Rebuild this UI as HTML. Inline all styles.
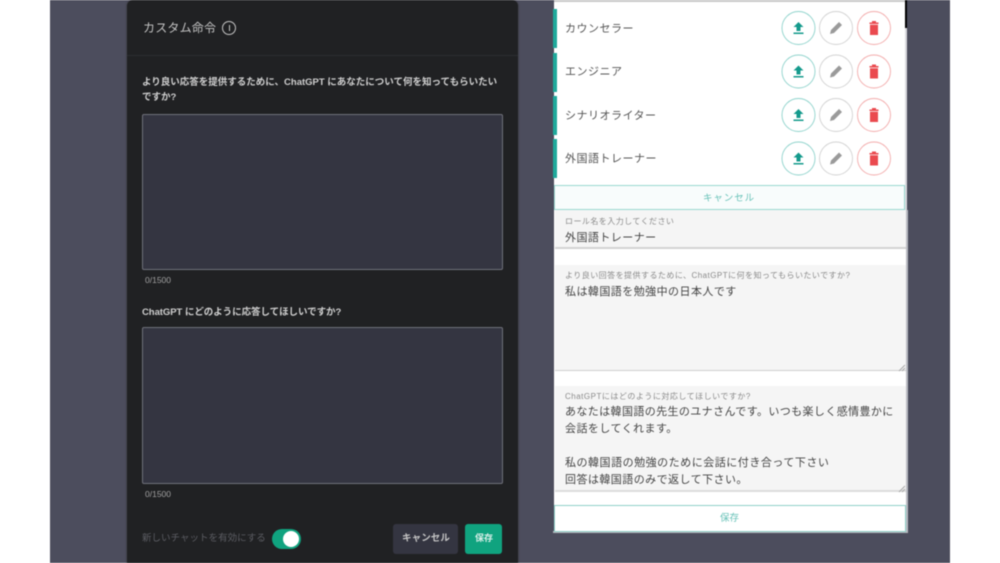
<!DOCTYPE html>
<html lang="ja"><head><meta charset="utf-8"><style>
*{box-sizing:border-box;margin:0;padding:0}
html,body{width:1000px;height:563px;overflow:hidden;background:#fff}
body{font-family:"Liberation Sans","Noto Sans CJK JP",sans-serif;position:relative}
#r{position:absolute;left:0;top:0;width:1000px;height:563px;filter:blur(.6px)}
#r div,#r svg{position:absolute}
.t{white-space:nowrap;line-height:1}
.ta{left:142px;width:361px;background:#343541;border:1.5px solid #6f7079;border-radius:2px}
.bar{left:553px;width:4px;height:39px;background:#1fa99b}
.rl{left:565px;font-size:11px;color:#555;letter-spacing:.5px}
.f{background:#f5f5f5;left:555px;width:350px}
.lb{left:565px;font-size:8px;color:#8a8a8a;letter-spacing:.45px}
.v{left:565px;font-size:11px;color:#444;letter-spacing:.45px}
</style></head><body><div id="r">
<div style="left:50px;top:0;width:900px;height:563px;background:#4c4d5d"></div>

<div style="left:127px;top:0;width:391px;height:563px;background:#202123;border-radius:6px 6px 0 0;box-shadow:0 0 2px #333"></div>
<div style="left:127px;top:55px;width:391px;height:1px;background:#2c2d30"></div>
<div class="t" style="left:143px;top:22px;font-size:12px;color:#c4c4c4;letter-spacing:.2px">カスタム命令</div>
<div style="left:222px;top:21px;width:14px;height:14px;border:1px solid #c5c5c5;border-radius:50%"></div>
<div style="left:228.500px;top:25px;width:1px;height:6px;background:#c5c5c5"></div>
<div class="t" style="left:142px;top:78px;font-size:9.500px;font-weight:bold;color:#cfcfcf;letter-spacing:0">より良い応答を提供するために、ChatGPT にあなたについて何を知ってもらいたい</div>
<div class="t" style="left:142px;top:93px;font-size:9.500px;font-weight:bold;color:#cfcfcf">ですか?</div>
<div class="ta" style="top:114px;height:156px"></div>
<div class="t" style="left:145px;top:276px;font-size:8.500px;color:#a0a0a0">0/1500</div>
<div class="t" style="left:142px;top:308px;font-size:9.500px;font-weight:bold;color:#cfcfcf;letter-spacing:-.05px">ChatGPT にどのように応答してほしいですか?</div>
<div class="ta" style="top:327px;height:157px"></div>
<div class="t" style="left:145px;top:490px;font-size:8.500px;color:#a0a0a0">0/1500</div>
<div class="t" style="left:142px;top:534px;font-size:9.500px;color:#5c5d63;letter-spacing:.02px">新しいチャットを有効にする</div>
<div style="left:272px;top:529px;width:29px;height:20px;background:#10a37f;border-radius:10px"></div>
<div style="left:283px;top:531px;width:16px;height:16px;background:#fff;border-radius:50%"></div>
<div style="left:393px;top:524px;width:65px;height:30px;background:#343541;border-radius:3px"></div>
<div class="t" style="left:402px;top:534px;font-size:9.500px;font-weight:bold;color:#c5c5c5;letter-spacing:.1px">キャンセル</div>
<div style="left:465px;top:524px;width:37px;height:30px;background:#10a37f;border-radius:3px"></div>
<div class="t" style="left:475px;top:534px;font-size:9px;font-weight:bold;color:#d9efe9">保存</div>

<div style="left:554px;top:0;width:351px;height:185px;background:#fff"></div>
<div style="left:554px;top:0;width:351px;height:2px;background:#c9c9c9"></div>
<div style="left:905px;top:0;width:1.500px;height:28px;background:#000"></div>
<div style="left:905px;top:28px;width:2px;height:182px;background:#d9d9de"></div>
<div class="bar" style="top:9px"></div><div class="bar" style="top:53px"></div><div class="bar" style="top:96px"></div><div class="bar" style="top:139px"></div>
<div class="t rl" style="top:24px">カウンセラー</div>
<div class="t rl" style="top:67px">エンジニア</div>
<div class="t rl" style="top:111px">シナリオライター</div>
<div class="t rl" style="top:154px">外国語トレーナー</div>

<svg style="left:780px;top:0" width="112" height="180" viewBox="0 0 112 180" fill="none">
<g id="a">
<circle cx="18.500" cy="28" r="16.500" stroke="#8fd3cc" stroke-width=".9" fill="#fff"/><path d="M18.500 22l5 5h-3v4h-4v-4h-3zM13.500 32.500h10V34h-10z" fill="#149a8c"/>
<circle cx="56" cy="28" r="16.500" stroke="#d2d2d2" stroke-width=".9" fill="#fff"/><path d="M50 34l1-4 8-8 3 3-8 8z" fill="#9a9a9a"/>
<circle cx="94" cy="28" r="16.500" stroke="#f3abab" stroke-width=".9" fill="#fff"/><path d="M89.500 22.500h9v1.500h-9zM90 24.800h8V35h-8zM92 21h4v1.500h-4z" fill="#ea4a4f"/>
</g>
<use href="#a" y="43.500"/><use href="#a" y="87"/><use href="#a" y="130.500"/>
</svg>

<div style="left:554px;top:185px;width:351px;height:25px;background:#f8fcfc;border:1px solid #9ad8d0"></div>
<div class="t" style="left:703px;top:194px;font-size:9.500px;color:#68c2b8;letter-spacing:.9px">キャンセル</div>

<div style="left:554px;top:210px;width:352px;height:322px;background:#fff"></div>
<div style="left:906px;top:210px;width:2px;height:322px;background:#b9bac2"></div>
<div style="left:553px;top:531px;width:355px;height:2px;background:#b5b8bd"></div>
<div class="f" style="top:210px;height:39px;border-bottom:2px solid #d2d2d2;width:351px"></div>
<div class="t lb" style="top:218px">ロール名を入力してください</div>
<div class="t v" style="top:233px">外国語トレーナー</div>
<div class="f" style="top:265px;height:106px;border-bottom:1px solid #cfcfcf;width:351px"></div>
<div class="t lb" style="top:272px;letter-spacing:.46px">より良い回答を提供するために、ChatGPTに何を知ってもらいたいですか?</div>
<div class="t v" style="top:287px">私は韓国語を勉強中の日本人です</div>
<div class="f" style="top:386px;height:106px;border-bottom:2px solid #dcdcdc;width:351px"></div>
<div class="t lb" style="top:393px;letter-spacing:.5px">ChatGPTにはどのように対応してほしいですか?</div>
<div class="t v" style="top:407px;letter-spacing:.39px">あなたは韓国語の先生のユナさんです。いつも楽しく感情豊かに</div>
<div class="t v" style="top:424px">会話をしてくれます。</div>
<div class="t v" style="top:458px;letter-spacing:.52px">私の韓国語の勉強のために会話に付き合って下さい</div>
<div class="t v" style="top:475px">回答は韓国語のみで返して下さい。</div>
<svg style="left:898px;top:364px" width="8" height="8"><path d="M1 7L7 1M4 7L7 4" stroke="#aaa"/></svg>
<svg style="left:898px;top:485px" width="8" height="8"><path d="M1 7L7 1M4 7L7 4" stroke="#aaa"/></svg>
<div style="left:554px;top:505px;width:352px;height:27px;background:#fff;border:1px solid #8fd0c8"></div>
<div class="t" style="left:720px;top:514px;font-size:9.500px;color:#68c2b8">保存</div>
</div></body></html>
